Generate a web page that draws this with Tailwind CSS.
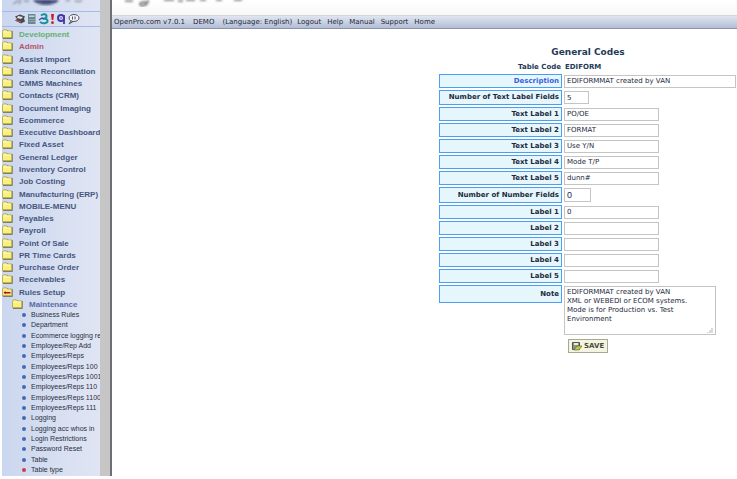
<!DOCTYPE html>
<html lang="en">
<head>
   <meta charset="UTF-8">
   <meta name="viewport" content="width=device-width, initial-scale=1.0">
   <script src="https://cdn.jsdelivr.net/npm/@tailwindcss/browser@4"></script>
   <title>OpenPro - General Codes</title>
</head>
<body class="bg-white flex min-h-screen pb-[3px] pl-[2px] overflow-hidden font-['DejaVu_Sans',sans-serif]">
   <!-- shared icons -->
   <svg class="hidden">
      <symbol id="folder" viewBox="0 0 11 10">
         <path d="M1 9.800V2L2 1h3l1 1h4.600v7.800z" fill="#5f5a34"/>
         <path d="M.5 8.800V2L1.500 .8h3L5.500 2H9.800v6.800z" fill="#fbf07c" stroke="#a39a48" stroke-width=".7"/>
         <path d="M1.300 3h7.500" stroke="#fffde0" stroke-width=".8"/>
      </symbol>
      <symbol id="folder-open" viewBox="0 0 11 10">
         <path d="M1 9.800V2L2 1h3l1 1h4.600v7.800z" fill="#5f5a34"/>
         <path d="M.5 8.800V2L1.500 .8h3L5.500 2H9.800v6.800z" fill="#fbe98a" stroke="#a39a48" stroke-width=".7"/>
         <path d="M1.500 5.500l2-1.500v1h5v1.500h-5v1z" fill="#b01818"/>
      </symbol>
   </svg>

   <aside class="w-[98px] shrink-0 overflow-hidden bg-linear-to-r from-[#cbd7ef] to-[#e0e5f3] font-['Liberation_Sans',Arial,sans-serif]">
      <svg class="block w-full h-[11px]" viewBox="0 0 98 11">
         <filter id="soft"><feGaussianBlur stdDeviation=".8"/></filter>
         <g filter="url(#soft)">
            <path d="M31 0c3 3.500 8 5 13 5s10-1.500 13-5z" fill="#2b3560"/>
            <path d="M36 2c5 2 11 2 16 0" stroke="#7484b4" fill="none"/>
            <path d="M11 4l6-4M19 0l-2 4M22 1l5 0M64 1l4-1M73 0c1 2 6 2 7 0" stroke="#8a8f9c" stroke-width="1.500" fill="none"/>
         </g>
      </svg>
      <div class="flex items-center h-[16px] border-y border-[#a3baea] pl-[12px]">
         <svg class="w-[66px] h-[12px]" viewBox="0 0 66 12">
            <path d="M1 3.500l5-2 5 2-1 2 1 3-4 2-6-3 2-1.500z" fill="#4a474e"/>
            <path d="M4 3l5 1-2 2-4-1z" fill="#e3e3e3"/><path d="M2 7.500l5 1.500" stroke="#b5605a"/>
            <path d="M14 1h7.500v10H14z" fill="#6c8590"/><path d="M15 2.500h5.500v1.500H15z" fill="#b5dccb"/>
            <path d="M16 6v4M18 6v4M20 6v4" stroke="#b9c9cc" stroke-dasharray="1"/>
            <path d="M27 2.500c2-2 5.500-1.500 5.500 .7 0 1.500-1.500 2.300-3 2.300 2 0 4 .5 4 2.500 0 2.500-5 3-7.500 1" fill="none" stroke="#17929a" stroke-width="2"/>
            <path d="M25 7l3-2 2 1" stroke="#2f4fa8" stroke-width="1.500" fill="none"/>
            <path d="M37 1h3l-.7 6h-1.600z" fill="#c81e2c"/><circle cx="38.500" cy="9.700" r="1.400" fill="#c81e2c"/>
            <circle cx="47" cy="5" r="3" fill="#e6e2fa" stroke="#4338a8" stroke-width="2"/><path d="M50 2v9" stroke="#4338a8" stroke-width="1.800" fill="none"/><path d="M46 5h2" stroke="#4338a8"/>
            <ellipse cx="60" cy="5" rx="5" ry="3.500" fill="#f3f4fa" stroke="#50525c"/><path d="M57 8l-2 3 4-2.500M58.500 3.500v3M61 3.500v3" fill="none" stroke="#50525c"/>
         </svg>
      </div>

      <!-- modules -->
      <ul class="grid auto-rows-fr h-[270px] mt-[2px] text-[8px] font-bold text-[#46577f] whitespace-nowrap leading-[12px]" id="modules">
         <li class="flex gap-[6px]"><svg class="w-[11px] h-[10px]"><use href="#folder"/></svg><a href="#" class="text-[#68b074]">Development</a></li>
         <li class="flex gap-[6px]"><svg class="w-[11px] h-[10px]"><use href="#folder"/></svg><a href="#" class="text-[#b5566b]">Admin</a></li>
         <li class="flex gap-[6px]"><svg class="w-[11px] h-[10px]"><use href="#folder"/></svg><a href="#">Assist Import</a></li>
         <li class="flex gap-[6px]"><svg class="w-[11px] h-[10px]"><use href="#folder"/></svg><a href="#">Bank Reconciliation</a></li>
         <li class="flex gap-[6px]"><svg class="w-[11px] h-[10px]"><use href="#folder"/></svg><a href="#">CMMS Machines</a></li>
         <li class="flex gap-[6px]"><svg class="w-[11px] h-[10px]"><use href="#folder"/></svg><a href="#">Contacts (CRM)</a></li>
         <li class="flex gap-[6px]"><svg class="w-[11px] h-[10px]"><use href="#folder"/></svg><a href="#">Document Imaging</a></li>
         <li class="flex gap-[6px]"><svg class="w-[11px] h-[10px]"><use href="#folder"/></svg><a href="#">Ecommerce</a></li>
         <li class="flex gap-[6px]"><svg class="w-[11px] h-[10px]"><use href="#folder"/></svg><a href="#">Executive Dashboard</a></li>
         <li class="flex gap-[6px]"><svg class="w-[11px] h-[10px]"><use href="#folder"/></svg><a href="#">Fixed Asset</a></li>
         <li class="flex gap-[6px]"><svg class="w-[11px] h-[10px]"><use href="#folder"/></svg><a href="#">General Ledger</a></li>
         <li class="flex gap-[6px]"><svg class="w-[11px] h-[10px]"><use href="#folder"/></svg><a href="#">Inventory Control</a></li>
         <li class="flex gap-[6px]"><svg class="w-[11px] h-[10px]"><use href="#folder"/></svg><a href="#">Job Costing</a></li>
         <li class="flex gap-[6px]"><svg class="w-[11px] h-[10px]"><use href="#folder"/></svg><a href="#">Manufacturing (ERP)</a></li>
         <li class="flex gap-[6px]"><svg class="w-[11px] h-[10px]"><use href="#folder"/></svg><a href="#">MOBILE-MENU</a></li>
         <li class="flex gap-[6px]"><svg class="w-[11px] h-[10px]"><use href="#folder"/></svg><a href="#">Payables</a></li>
         <li class="flex gap-[6px]"><svg class="w-[11px] h-[10px]"><use href="#folder"/></svg><a href="#">Payroll</a></li>
         <li class="flex gap-[6px]"><svg class="w-[11px] h-[10px]"><use href="#folder"/></svg><a href="#">Point Of Sale</a></li>
         <li class="flex gap-[6px]"><svg class="w-[11px] h-[10px]"><use href="#folder"/></svg><a href="#">PR Time Cards</a></li>
         <li class="flex gap-[6px]"><svg class="w-[11px] h-[10px]"><use href="#folder"/></svg><a href="#">Purchase Order</a></li>
         <li class="flex gap-[6px]"><svg class="w-[11px] h-[10px]"><use href="#folder"/></svg><a href="#">Receivables</a></li>
         <li class="flex gap-[6px]"><svg class="w-[11px] h-[10px]"><use href="#folder-open"/></svg><a href="#">Rules Setup</a></li>
      </ul>
      <div class="flex gap-[6px] pl-[10px] text-[8px] font-bold text-[#5a6ba6] leading-[11px]"><svg class="w-[11px] h-[10px]"><use href="#folder"/></svg><a href="#">Maintenance</a></div>
      <ul class="grid auto-rows-fr h-[165px] pl-[20px] text-[7px] text-[#2a2f3c] whitespace-nowrap leading-[10px]" id="maintenance">
         <li class="flex items-center gap-[5px]"><span class="size-[4px] rounded-full bg-[#4468b4]"></span><a href="#">Business Rules</a></li>
         <li class="flex items-center gap-[5px]"><span class="size-[4px] rounded-full bg-[#4468b4]"></span><a href="#">Department</a></li>
         <li class="flex items-center gap-[5px]"><span class="size-[4px] rounded-full bg-[#4468b4]"></span><a href="#">Ecommerce logging re</a></li>
         <li class="flex items-center gap-[5px]"><span class="size-[4px] rounded-full bg-[#4468b4]"></span><a href="#">Employee/Rep Add</a></li>
         <li class="flex items-center gap-[5px]"><span class="size-[4px] rounded-full bg-[#4468b4]"></span><a href="#">Employees/Reps</a></li>
         <li class="flex items-center gap-[5px]"><span class="size-[4px] rounded-full bg-[#4468b4]"></span><a href="#">Employees/Reps 100</a></li>
         <li class="flex items-center gap-[5px]"><span class="size-[4px] rounded-full bg-[#4468b4]"></span><a href="#">Employees/Reps 1001</a></li>
         <li class="flex items-center gap-[5px]"><span class="size-[4px] rounded-full bg-[#4468b4]"></span><a href="#">Employees/Reps 110</a></li>
         <li class="flex items-center gap-[5px]"><span class="size-[4px] rounded-full bg-[#4468b4]"></span><a href="#">Employees/Reps 1100</a></li>
         <li class="flex items-center gap-[5px]"><span class="size-[4px] rounded-full bg-[#4468b4]"></span><a href="#">Employees/Reps 111</a></li>
         <li class="flex items-center gap-[5px]"><span class="size-[4px] rounded-full bg-[#4468b4]"></span><a href="#">Logging</a></li>
         <li class="flex items-center gap-[5px]"><span class="size-[4px] rounded-full bg-[#4468b4]"></span><a href="#">Logging acc whos in</a></li>
         <li class="flex items-center gap-[5px]"><span class="size-[4px] rounded-full bg-[#4468b4]"></span><a href="#">Login Restrictions</a></li>
         <li class="flex items-center gap-[5px]"><span class="size-[4px] rounded-full bg-[#4468b4]"></span><a href="#">Password Reset</a></li>
         <li class="flex items-center gap-[5px]"><span class="size-[4px] rounded-full bg-[#4468b4]"></span><a href="#">Table</a></li>
         <li class="flex items-center gap-[5px]"><span class="size-[4px] rounded-full bg-[#d03a4c]"></span><a href="#">Table type</a></li>
      </ul>
   </aside>
   <!-- frame scrollbar -->
   <div class="w-[12px] shrink-0 bg-[#c6c6c6] border-r-2 border-[#6e6e74]"></div>

   <div class="flex-grow min-w-0">
      <header>
         <svg class="block w-full h-[15px] bg-linear-to-b from-white to-[#f8f8f9]">
            <g filter="url(#soft)" fill="none" stroke="#7d7d7d">
               <path d="M36 0c0 6-8 7-8 4 0-2 4-2 6-2" stroke-width="2"/>
               <path d="M13 1h8M52 0h10M66 1h5M74 0h9M88 0h6M104 0h6M122 0h8" stroke="#8f8f8f" stroke-width="2"/>
            </g>
         </svg>
         <nav class="flex items-center h-[14px] pl-[2px] bg-linear-to-b from-[#e0e5f0] to-[#b3bed6] border-y border-t-[#d3d6dd] border-b-[#8b93a6] text-[7px] text-[#23283a] whitespace-nowrap">
            <span class="mr-[8px]">OpenPro.com v7.0.1</span>
            <span class="mr-[8px]">DEMO</span>
            <span class="mr-[5px]">(Language: English)</span>
            <div class="flex gap-[6px]">
               <a href="#">Logout</a>
               <a href="#">Help</a>
               <a href="#">Manual</a>
               <a href="#">Support</a>
               <a href="#">Home</a>
            </div>
         </nav>
      </header>

      <form class="w-[298px] ml-auto mt-[17px] text-[7px] text-[#1c2a3c]">
         <h1 class="text-center text-[9px] font-bold text-[#1f3b57] leading-[12px]">General Codes</h1>
         <div class="flex gap-[4px] mt-[3px] mb-[1px] leading-[12px] font-bold text-[#1f3b57]">
            <span class="w-[122px] text-right">Table Code</span><span>EDIFORM</span>
         </div>
         <div class="space-y-[2px]">
            <div class="flex items-center gap-[2px]">
               <label for="description" class="w-[123px] h-[14px] border border-[#4a9ff2] bg-[#e6f6fd] pr-[2px] text-right font-bold leading-[12px] whitespace-nowrap text-[#3a5fe0]">Description</label>
               <input type="text" id="description" value="EDIFORMMAT created by VAN" class="w-[172px] h-[13px] border border-[#c4c4c4] bg-white pl-[2px]">
            </div>
            <div class="flex items-center gap-[2px]">
               <label for="textcount" class="w-[123px] h-[15px] border border-[#4a9ff2] bg-[#e6f6fd] pr-[2px] text-right font-bold leading-[13px] whitespace-nowrap">Number of Text Label Fields</label>
               <input type="text" id="textcount" value="5" class="w-[25px] h-[13px] border border-[#c4c4c4] bg-white pl-[2px]">
            </div>
            <div class="flex items-center gap-[2px]">
               <label for="text1" class="w-[123px] h-[14px] border border-[#4a9ff2] bg-[#e6f6fd] pr-[2px] text-right font-bold leading-[12px]">Text Label 1</label>
               <input type="text" id="text1" value="PO/OE" class="w-[95px] h-[13px] border border-[#c4c4c4] bg-white pl-[2px]">
            </div>
            <div class="flex items-center gap-[2px]">
               <label for="text2" class="w-[123px] h-[14px] border border-[#4a9ff2] bg-[#e6f6fd] pr-[2px] text-right font-bold leading-[12px]">Text Label 2</label>
               <input type="text" id="text2" value="FORMAT" class="w-[95px] h-[13px] border border-[#c4c4c4] bg-white pl-[2px]">
            </div>
            <div class="flex items-center gap-[2px]">
               <label for="text3" class="w-[123px] h-[14px] border border-[#4a9ff2] bg-[#e6f6fd] pr-[2px] text-right font-bold leading-[12px]">Text Label 3</label>
               <input type="text" id="text3" value="Use Y/N" class="w-[95px] h-[13px] border border-[#c4c4c4] bg-white pl-[2px]">
            </div>
            <div class="flex items-center gap-[2px]">
               <label for="text4" class="w-[123px] h-[14px] border border-[#4a9ff2] bg-[#e6f6fd] pr-[2px] text-right font-bold leading-[12px]">Text Label 4</label>
               <input type="text" id="text4" value="Mode T/P" class="w-[95px] h-[13px] border border-[#c4c4c4] bg-white pl-[2px]">
            </div>
            <div class="flex items-center gap-[2px]">
               <label for="text5" class="w-[123px] h-[14px] border border-[#4a9ff2] bg-[#e6f6fd] pr-[2px] text-right font-bold leading-[12px]">Text Label 5</label>
               <input type="text" id="text5" value="dunn#" class="w-[95px] h-[13px] border border-[#c4c4c4] bg-white pl-[2px]">
            </div>
            <div class="flex items-center gap-[2px]">
               <label for="numcount" class="w-[123px] h-[16px] border border-[#4a9ff2] bg-[#e6f6fd] pr-[2px] text-right font-bold leading-[14px]">Number of Number Fields</label>
               <input type="text" id="numcount" value="0" class="w-[27px] h-[14px] border border-[#c4c4c4] bg-white pl-[2px] text-[9px] font-['Liberation_Sans',sans-serif]">
            </div>
            <div class="flex items-center gap-[2px]">
               <label for="num1" class="w-[123px] h-[14px] border border-[#4a9ff2] bg-[#e6f6fd] pr-[2px] text-right font-bold leading-[12px]">Label 1</label>
               <input type="text" id="num1" value="0" class="w-[95px] h-[13px] border border-[#c4c4c4] bg-white pl-[2px]">
            </div>
            <div class="flex items-center gap-[2px]">
               <label for="num2" class="w-[123px] h-[14px] border border-[#4a9ff2] bg-[#e6f6fd] pr-[2px] text-right font-bold leading-[12px]">Label 2</label>
               <input type="text" id="num2" class="w-[95px] h-[13px] border border-[#c4c4c4] bg-white pl-[2px]">
            </div>
            <div class="flex items-center gap-[2px]">
               <label for="num3" class="w-[123px] h-[14px] border border-[#4a9ff2] bg-[#e6f6fd] pr-[2px] text-right font-bold leading-[12px]">Label 3</label>
               <input type="text" id="num3" class="w-[95px] h-[13px] border border-[#c4c4c4] bg-white pl-[2px]">
            </div>
            <div class="flex items-center gap-[2px]">
               <label for="num4" class="w-[123px] h-[14px] border border-[#4a9ff2] bg-[#e6f6fd] pr-[2px] text-right font-bold leading-[12px]">Label 4</label>
               <input type="text" id="num4" class="w-[95px] h-[13px] border border-[#c4c4c4] bg-white pl-[2px]">
            </div>
            <div class="flex items-center gap-[2px]">
               <label for="num5" class="w-[123px] h-[14px] border border-[#4a9ff2] bg-[#e6f6fd] pr-[2px] text-right font-bold leading-[12px]">Label 5</label>
               <input type="text" id="num5" class="w-[95px] h-[13px] border border-[#c4c4c4] bg-white pl-[2px]">
            </div>
            <div class="flex items-start gap-[2px]">
               <label for="note" class="w-[123px] h-[18px] border border-[#4a9ff2] bg-[#e6f6fd] pr-[2px] text-right font-bold leading-[16px]">Note</label>
               <div class="relative mt-[1px]">
                  <textarea id="note" class="block w-[152px] h-[49px] border border-[#c4c4c4] bg-white pl-[2px] pr-[20px] pt-[1px] leading-[9px] resize-none overflow-hidden">EDIFORMMAT created by VAN
XML or WEBEDI or ECOM systems. Mode is for Production vs. Test Environment</textarea>
                  <svg class="absolute right-[3px] bottom-[2px] w-[6px] h-[6px]" viewBox="0 0 6 6"><path d="M1 5v1M3 3v3M5 1v5" stroke="#b5b5b5"/></svg>
               </div>
            </div>
         </div>
         <button type="button" class="flex items-center gap-[2px] ml-[129px] mt-[4px] w-[40px] h-[14px] pl-[3px] border border-[#a9a98c] bg-[#f5f4e2] text-[7px] font-bold text-[#4c4c34]">
            <svg class="w-[10px] h-[9px]" viewBox="0 0 10 9"><path d="M.5 .5h7v7h-7z" fill="#8a9488" stroke="#4e584c"/><path d="M2 1h4v2H2z" fill="#e9ede4"/><path d="M2 8l3-4h5L7 8z" fill="#c5c948" stroke="#55602c" stroke-width=".6"/></svg>
            SAVE
         </button>
      </form>
   </div>
</body>
</html>
